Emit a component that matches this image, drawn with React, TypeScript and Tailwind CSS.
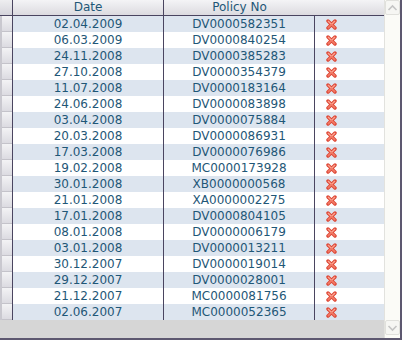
import React from "react";

const rows: [string, string][] = [
  ["02.04.2009", "DV0000582351"],
  ["06.03.2009", "DV0000840254"],
  ["24.11.2008", "DV0000385283"],
  ["27.10.2008", "DV0000354379"],
  ["11.07.2008", "DV0000183164"],
  ["24.06.2008", "DV0000083898"],
  ["03.04.2008", "DV0000075884"],
  ["20.03.2008", "DV0000086931"],
  ["17.03.2008", "DV0000076986"],
  ["19.02.2008", "MC0000173928"],
  ["30.01.2008", "XB0000000568"],
  ["21.01.2008", "XA0000002275"],
  ["17.01.2008", "DV0000804105"],
  ["08.01.2008", "DV0000006179"],
  ["03.01.2008", "DV0000013211"],
  ["30.12.2007", "DV0000019014"],
  ["29.12.2007", "DV0000028001"],
  ["21.12.2007", "MC0000081756"],
  ["02.06.2007", "MC0000052365"],
];

function CrossIcon() {
  return (
    <svg width="11" height="11" viewBox="0 0 11 11">
      <g strokeLinecap="round">
        <line x1="2" y1="2" x2="9" y2="9" stroke="#dc4433" strokeWidth="3.4" />
        <line x1="9" y1="2" x2="2" y2="9" stroke="#dc4433" strokeWidth="3.4" />
        <line x1="2.3" y1="2.3" x2="8.7" y2="8.7" stroke="#f27a66" strokeWidth="1.8" />
        <line x1="8.7" y1="2.3" x2="2.3" y2="8.7" stroke="#f27a66" strokeWidth="1.8" />
        <line x1="2.5" y1="2.3" x2="5" y2="4.8" stroke="#fab5a6" strokeWidth="0.9" />
        <line x1="8.5" y1="2.3" x2="6" y2="4.8" stroke="#fab5a6" strokeWidth="0.9" />
      </g>
    </svg>
  );
}

function Chevron({ up }: { up: boolean }) {
  return (
    <svg width="11" height="8" viewBox="0 0 11 8">
      <polyline
        points={up ? "1.5,6 5.5,2 9.5,6" : "1.5,2 5.5,6 9.5,2"}
        fill="none"
        stroke="#c4c4c4"
        strokeWidth="1.6"
      />
    </svg>
  );
}

export default function App() {
  return (
    <div
      className="w-[402px] h-[340px] flex border-r-2 border-b-2 border-[#5d5870] bg-[#d6d6d6] text-[12px] text-[#1f5777] overflow-hidden"
      style={{ fontFamily: '"DejaVu Sans", Verdana, sans-serif' }}
    >
      <div className="w-[384px] flex flex-col">
        {/* Header */}
        <div className="flex h-[16px] border-b border-[#4a4560] bg-gradient-to-b from-[#f4f4f6] to-[#dcdbe0] shrink-0">
          <div className="w-[13px] border-r border-[#4a4560] bg-gradient-to-b from-[#eeeef0] to-[#d6d5dc]" />
          <div className="w-[151px] border-r border-[#4a4560] flex items-center justify-center leading-[15px]">
            Date
          </div>
          <div className="w-[151px] flex items-center justify-center leading-[15px]">
            Policy No
          </div>
          <div className="flex-1" />
        </div>
        {/* Rows */}
        {rows.map(([d, p], i) => (
          <div
            key={i}
            className={`flex h-[16px] shrink-0 ${i % 2 === 0 ? "bg-[#dde5ef]" : "bg-white"}`}
          >
            <div className="w-[13px] border-r border-[#4a4560] bg-[#d8d7de] flex">
              <div className="w-[2px] bg-[#c9c8cf]" />
              <div className="flex-1 bg-gradient-to-b from-[#f3f3f5] to-[#dcdbe1] border-b border-[#c4c3ca]" />
            </div>
            <div className="w-[151px] border-r border-[#4a4560] flex items-center justify-center leading-[16px]">
              {d}
            </div>
            <div className="w-[151px] border-r border-[#4a4560] flex items-center justify-center leading-[16px]">
              {p}
            </div>
            <div className="flex-1 flex items-center pl-[11px]">
              <CrossIcon />
            </div>
          </div>
        ))}
        <div className="flex-1 bg-[#d6d6d6]" />
      </div>
      {/* Scrollbar */}
      <div className="w-[16px] flex flex-col bg-[#fbfbf7] border-l border-[#e2e2de]">
        <div className="h-[15px] flex items-center justify-center border border-[#e0e0dc] rounded-[2px] bg-[#f6f6f3]">
          <Chevron up />
        </div>
        <div className="flex-1" />
        <div className="h-[15px] mb-[3px] flex items-center justify-center border border-[#e0e0dc] rounded-[2px] bg-[#f6f6f3]">
          <Chevron up={false} />
        </div>
      </div>
    </div>
  );
}
